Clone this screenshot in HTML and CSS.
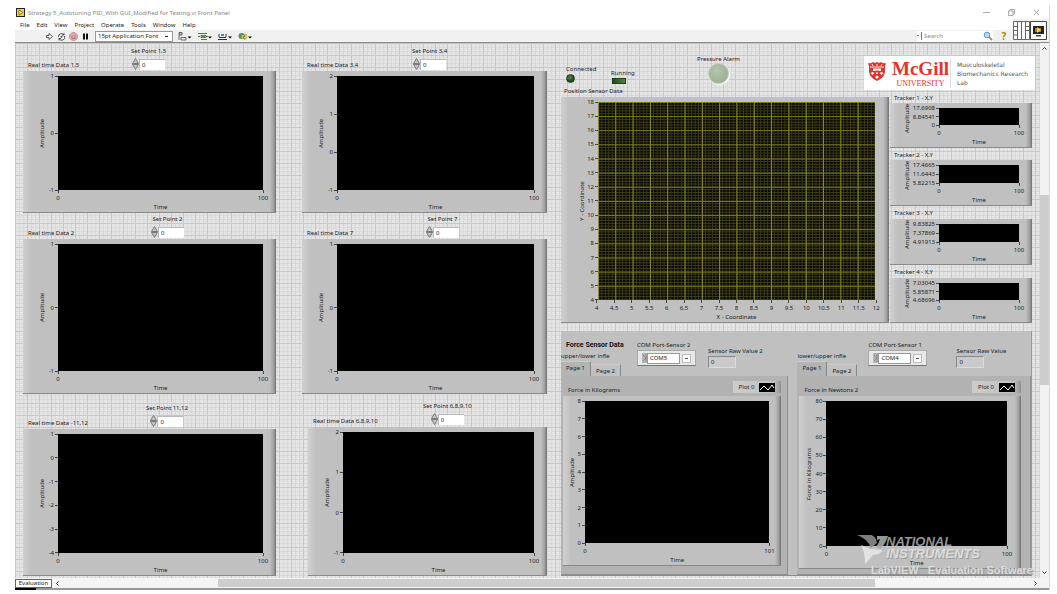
FILE: index.html
```html
<!DOCTYPE html>
<html lang="en">
<head>
<meta charset="utf-8">
<title>Strategy 5_Autotuning PID_With GUI_Modified for Testing.vi Front Panel</title>
<link rel="stylesheet" href="styles.css">
</head>
<body>
<svg class="defs" width="0" height="0" aria-hidden="true">
  <symbol id="spin" viewBox="0 0 7 12"><path d="M3.500 .5 6.500 5.500H.5zM3.500 11.500.5 6.500h6z" fill="#c4c4c4" stroke="#666" stroke-width=".8"/></symbol>
  <symbol id="wave" viewBox="0 0 16 9"><path d="M0 0h16v9H0z"/><path d="M1 7l4-4 4 4 4-5 2 3" fill="none" stroke="#fff"/></symbol>
  <symbol id="io" viewBox="0 0 5 10"><path d="M0 0h5v10H0z" fill="#b5b5b5"/><path d="M1 2l3 3-3 3M4 1v8" fill="none" stroke="#777" stroke-width=".7"/></symbol>
</svg>
<div class="window">
  <header class="titlebar">
    <svg class="app-icon" viewBox="0 0 9 9"><path d="M0 0h9v9H0z" fill="#222"/><path d="M1 1h7v7H1z" fill="#ffd21e"/><path d="M3 2l4 2.500L3 7z" fill="#fff7a0" stroke="#333" stroke-width=".6"/></svg>
    <h1 class="caption">Strategy 5_Autotuning PID_With GUI_Modified for Testing.vi Front Panel</h1>
    <div class="window-buttons">
      <button aria-label="Minimize"><svg viewBox="0 0 7 7"><path d="M0 3.500h7"/></svg></button>
      <button aria-label="Restore"><svg viewBox="0 0 7 7"><path d="M.5 2h4.500v4.500H.5zM2 2V.5h4.500V5H5"/></svg></button>
      <button aria-label="Close"><svg viewBox="0 0 7 7"><path d="M1 1l5 5M6 1L1 6"/></svg></button>
    </div>
  </header>
  <div class="bars">
    <div class="bar-stack">
      <nav class="menubar">
        <button>File</button><button>Edit</button><button>View</button><button>Project</button><button>Operate</button><button>Tools</button><button>Window</button><button>Help</button>
      </nav>
      <div class="toolbar">
        <div class="tool-run">
          <button aria-label="Run"><svg viewBox="0 0 9 9"><path d="M1.500 3.500h2.500V1.500l3.500 3L4 7.500V5.500H1.500z" fill="#fff" stroke="#333" stroke-width=".8"/></svg></button>
          <button aria-label="Run Continuously"><svg viewBox="0 0 9 9"><path d="M1.500 5A3 3 0 0 1 7 3M7.500 4A3 3 0 0 1 2 6.500M7 1v2H5M2 8.500v-2h2" fill="none" stroke="#333" stroke-width=".8"/><circle cx="4.500" cy="4.700" r="1" fill="#555"/></svg></button>
          <button aria-label="Abort"><svg viewBox="0 0 9 9"><path d="M3 .5h3L8.500 3v3L6 8.500H3L.5 6V3z" fill="#dba5a5" stroke="#c9a0a0"/><path d="M3 4v2.500h3V3.500" fill="none" stroke="#b77"/></svg></button>
          <button aria-label="Pause"><svg viewBox="0 0 9 9"><path d="M2 1.500h2v6H2zM5 1.500h2v6H5z" fill="#111"/></svg></button>
        </div>
        <select class="font-select" aria-label="Text settings"><option>15pt Application Font</option></select>
        <div class="tool-align">
          <button aria-label="Align"><svg viewBox="0 0 14 9"><path d="M1 .5h3v2.500H1z" fill="#9cc"/><path d="M1 .5h3v2.500H1zM1 3v5M3 5.500h5v2.500H3z" fill="none" stroke="#444" stroke-width=".8"/><path d="M9.500 4.500h4l-2 2z"/></svg></button>
          <button aria-label="Distribute"><svg viewBox="0 0 14 9"><path d="M0 1.500h9M0 4.500h2M8 4.500h2M3 3.500h5v2H3zM3 7.500h6" fill="none" stroke="#444" stroke-width=".8"/><path d="M3 4h4v1H3z" fill="#6a6"/><path d="M10 4.500h4l-2 2z"/></svg></button>
          <button aria-label="Resize"><svg viewBox="0 0 14 9"><path d="M0 7.500h9M1 5.500h7M1 2v3M8 2v3" fill="none" stroke="#333"/><path d="M3 2h3v2H3z" fill="#48a"/><path d="M10 4.500h4l-2 2z"/></svg></button>
          <button aria-label="Reorder"><svg viewBox="0 0 14 9"><circle cx="3.500" cy="4" r="3" fill="#4a9a5a"/><circle cx="6.500" cy="4.500" r="3" fill="#e8c33a"/><path d="M4 2.500c3-1 3 2 1 3l2 2" fill="none" stroke="#2c63a8"/><path d="M10 4.500h4l-2 2z"/></svg></button>
        </div>
        <div class="search"><span aria-hidden="true">•</span><input type="search" aria-label="Search" placeholder="Search"><svg viewBox="0 0 10 10"><path d="M6 6l3 3" stroke="#b58a4a" stroke-width="1.800"/><circle cx="4" cy="4" r="2.800" fill="#b8dcf5" stroke="#5a94c4"/></svg></div>
        <button class="help" aria-label="Context help">?</button>
      </div>
    </div>
    <svg class="connector" viewBox="0 0 17 19"><path d="M.5 .5h16v18H.5zM4.500 .5v18M8.500 .5v18M12.500 .5v18M.5 9.500h4M12.500 9.500h4M.5 5.500h4M12.500 5.500h4M.5 14h4" fill="#fff" stroke="#666"/></svg>
    <svg class="vi-icon" viewBox="0 0 17 19"><path d="M.5 .5h16v18H.5z" fill="#fff" stroke="#444"/><path d="M3 5h11v8H3z" fill="#222"/><path d="M5 7h6v4H5z" fill="#a77b22"/><path d="M7 6l4 3-4 3z" fill="#ffd21e"/><path d="M6 14h5v1.500H6z" fill="#345"/></svg>
  </div>

  <div class="workspace">
    <main class="canvas">
      <div class="col col-a">
        <section class="graph r1">
          <div class="graph-head"><h2>Real time Data 1,5</h2><div class="setpoint"><label for="s1">Set Point 1,5</label><div class="spinner"><svg><use href="#spin"/></svg><input id="s1" value="0"></div></div></div>
          <div class="chart">
            <div class="yaxis"><span class="ytitle">Amplitude</span><div class="yticks"><span>1</span><span>0</span><span>-1</span></div></div>
            <div class="plot"></div>
            <div class="xticks"><span>0</span><span>100</span></div><div class="xtitle">Time</div>
          </div>
        </section>
        <section class="graph r2">
          <div class="graph-head"><h2>Real time Data 2</h2><div class="setpoint"><label for="s2">Set Point 2</label><div class="spinner"><svg><use href="#spin"/></svg><input id="s2" value="0"></div></div></div>
          <div class="chart">
            <div class="yaxis"><span class="ytitle">Amplitude</span><div class="yticks"><span>1</span><span>0</span><span>-1</span></div></div>
            <div class="plot"></div>
            <div class="xticks"><span>0</span><span>100</span></div><div class="xtitle">Time</div>
          </div>
        </section>
        <section class="graph r3">
          <div class="graph-head"><h2>Real time Data -11,12</h2><div class="setpoint"><label for="s3">Set Point 11,12</label><div class="spinner"><svg><use href="#spin"/></svg><input id="s3" value="0"></div></div></div>
          <div class="chart">
            <div class="yaxis"><span class="ytitle">Amplitude</span><div class="yticks"><span>1</span><span>0</span><span>-1</span><span>-2</span><span>-3</span><span>-4</span></div></div>
            <div class="plot"></div>
            <div class="xticks"><span>0</span><span>100</span></div><div class="xtitle">Time</div>
          </div>
        </section>
      </div>

      <div class="col col-b">
        <section class="graph r1">
          <div class="graph-head"><h2>Real time Data 3,4</h2><div class="setpoint"><label for="s4">Set Point 3,4</label><div class="spinner"><svg><use href="#spin"/></svg><input id="s4" value="0"></div></div></div>
          <div class="chart">
            <div class="yaxis"><span class="ytitle">Amplitude</span><div class="yticks"><span>2</span><span>1</span><span>0</span><span>-1</span></div></div>
            <div class="plot"></div>
            <div class="xticks"><span>0</span><span>100</span></div><div class="xtitle">Time</div>
          </div>
        </section>
        <section class="graph r2">
          <div class="graph-head"><h2>Real time Data 7</h2><div class="setpoint"><label for="s5">Set Point 7</label><div class="spinner"><svg><use href="#spin"/></svg><input id="s5" value="0"></div></div></div>
          <div class="chart">
            <div class="yaxis"><span class="ytitle">Amplitude</span><div class="yticks"><span>1</span><span>0</span><span>-1</span></div></div>
            <div class="plot"></div>
            <div class="xticks"><span>0</span><span>100</span></div><div class="xtitle">Time</div>
          </div>
        </section>
        <section class="graph r3 short">
          <div class="graph-head"><h2>Real time Data 6,8,9,10</h2><div class="setpoint"><label for="s6">Set Point 6,8,9,10</label><div class="spinner"><svg><use href="#spin"/></svg><input id="s6" value="0"></div></div></div>
          <div class="chart">
            <div class="yaxis"><span class="ytitle">Amplitude</span><div class="yticks"><span>2</span><span>1</span><span>0</span><span>-1</span></div></div>
            <div class="plot"></div>
            <div class="xticks"><span>0</span><span>100</span></div><div class="xtitle">Time</div>
          </div>
        </section>
      </div>

      <div class="col col-c">
        <div class="status">
          <div class="led connected"><span>Connected</span><i></i></div>
          <div class="led running"><span>Running</span><i></i></div>
          <div class="led alarm"><span>Pressure Alarm</span><i></i></div>
          <div class="brand">
            <svg class="crest" viewBox="0 0 20 21"><path d="M1 2q3 1 5-1l2 1 2-1 2 1 2-1q2 2 5 1l-1 3v6q-1 6-8 9-7-3-8-9V5z" fill="#e2332b"/><path d="M3 6h14M5 3l1 2M10 3v2M15 3l-1 2" stroke="#fff" stroke-width=".9"/><path d="M6 7.500h8v2.500q-4-1-8 0zM3.500 12l2-1 2 1-2 2zM12.500 12l2-1 2 1-2 2zM8 16l2-1.500 2 1.500-2 2zM9 11.500h2v1.500H9z" fill="#fff"/></svg>
            <div class="mcgill"><strong>McGill</strong><small>UNIVERSITY</small></div>
            <p>Musculoskeletal<br>Biomechanics Research<br>Lab</p>
          </div>
        </div>

        <div class="sensors">
          <section class="position">
            <h2>Position Sensor Data</h2>
            <div class="chart">
              <div class="yaxis"><span class="ytitle">Y - Coordinate</span><div class="yticks"><span>18</span><span>17</span><span>16</span><span>15</span><span>14</span><span>13</span><span>12</span><span>11</span><span>10</span><span>9</span><span>8</span><span>7</span><span>6</span><span>5</span><span>4</span></div></div>
              <div class="plot"></div>
              <div class="xticks"><span>4</span><span>4.5</span><span>5</span><span>5.5</span><span>6</span><span>6.5</span><span>7</span><span>7.5</span><span>8</span><span>8.5</span><span>9</span><span>9.5</span><span>10</span><span>10.5</span><span>11</span><span>11.5</span><span>12</span></div><div class="xtitle">X - Coordinate</div>
            </div>
          </section>
          <div class="trackers">
            <section class="tracker"><h2>Tracker 1 - X,Y</h2>
              <div class="chart"><div class="yaxis"><span class="ytitle">Amplitude</span><div class="yticks"><span>17.6908</span><span>8.84541</span><span>0</span></div></div><div class="plot"></div><div class="xticks"><span>0</span><span>100</span></div><div class="xtitle">Time</div></div></section>
            <section class="tracker"><h2>Tracker 2 - X,Y</h2>
              <div class="chart"><div class="yaxis"><span class="ytitle">Amplitude</span><div class="yticks"><span>17.4665</span><span>11.6443</span><span>5.82215</span></div></div><div class="plot"></div><div class="xticks"><span>0</span><span>100</span></div><div class="xtitle">Time</div></div></section>
            <section class="tracker"><h2>Tracker 3 - X,Y</h2>
              <div class="chart"><div class="yaxis"><span class="ytitle">Amplitude</span><div class="yticks"><span>9.83825</span><span>7.37869</span><span>4.91913</span></div></div><div class="plot"></div><div class="xticks"><span>0</span><span>100</span></div><div class="xtitle">Time</div></div></section>
            <section class="tracker"><h2>Tracker 4 - X,Y</h2>
              <div class="chart"><div class="yaxis"><span class="ytitle">Amplitude</span><div class="yticks"><span>7.03045</span><span>5.85871</span><span>4.68696</span></div></div><div class="plot"></div><div class="xticks"><span>0</span><span>100</span></div><div class="xtitle">Time</div></div></section>
          </div>
        </div>

        <section class="force">
          <div class="unit unit-left">
            <div class="unit-head">
              <div class="unit-tabs">
                <h2 class="force-title">Force Sensor Data</h2>
                <span>upper/lower infle</span>
                <div class="tabs" role="tablist"><button role="tab" aria-selected="true">Page 1</button><button role="tab" aria-selected="false">Page 2</button></div>
              </div>
              <div class="com"><label for="c2">COM Port-Sensor 2</label><div class="combo"><svg><use href="#io"/></svg><select id="c2"><option>COM5</option></select><i></i></div></div>
              <div class="raw"><label for="v2">Sensor Raw Value 2</label><input id="v2" value="0" readonly></div>
            </div>
            <div class="page">
              <div class="page-head"><h3>Force in Kilograms</h3><div class="legend">Plot 0<svg><use href="#wave"/></svg></div></div>
              <div class="chart">
                <div class="yaxis"><span class="ytitle">Amplitude</span><div class="yticks"><span>8</span><span>7</span><span>6</span><span>5</span><span>4</span><span>3</span><span>2</span><span>1</span><span>0</span></div></div>
                <div class="plot"></div>
                <div class="xticks"><span>0</span><span>101</span></div><div class="xtitle">Time</div>
              </div>
            </div>
          </div>
          <div class="unit unit-right">
            <div class="unit-head">
              <div class="unit-tabs">
                <span>lower/upper infle</span>
                <div class="tabs" role="tablist"><button role="tab" aria-selected="true">Page 1</button><button role="tab" aria-selected="false">Page 2</button></div>
              </div>
              <div class="com"><label for="c1">COM Port-Sensor 1</label><div class="combo"><svg><use href="#io"/></svg><select id="c1"><option>COM4</option></select><i></i></div></div>
              <div class="raw"><label for="v1">Sensor Raw Value</label><input id="v1" value="0" readonly></div>
            </div>
            <div class="page">
              <div class="page-head"><h3>Force in Newtons 2</h3><div class="legend">Plot 0<svg><use href="#wave"/></svg></div></div>
              <div class="chart">
                <div class="yaxis"><span class="ytitle">Force in Kilograms</span><div class="yticks"><span>80</span><span>70</span><span>60</span><span>50</span><span>40</span><span>30</span><span>20</span><span>10</span><span>0</span></div></div>
                <div class="plot"></div>
                <div class="xticks"><span>0</span><span>100</span></div><div class="xtitle">Time</div>
              </div>
            </div>
          </div>
        </section>
      </div>
      <div class="watermark">
        <div class="ni"><svg viewBox="0 0 32 30"><path d="M0 1h14q5 1 6 8l-6 5Q11 5 0 1z" fill="#8c8c8c"/><path d="M20 2h11q-3 9-8 13l-4-2q3-4 4-8l-3 1z" fill="#a8a8a8"/><path d="M4 11l9 4 12 1q0 4-9 5l-8 9q0-12-4-19z" fill="#e6e6e6"/></svg>
          <div class="ni-name"><span>NATIONAL</span><br>INSTRUMENTS</div></div>
        <div class="ni-edition">LabVIEW&nbsp;&nbsp; Evaluation Software</div>
      </div>
    </main>
    <div class="vscroll"><svg viewBox="0 0 7 7"><path d="M1.500 4.500l2-2 2 2"/></svg><div class="vtrack"><i></i></div><svg viewBox="0 0 7 7"><path d="M1.500 2.500l2 2 2-2"/></svg></div>
  </div>
  <footer class="bottom"><span class="edition">Evaluation</span><svg viewBox="0 0 7 7"><path d="M4.500 1.500l-2 2 2 2"/></svg><div class="htrack"><i></i></div><svg viewBox="0 0 7 7"><path d="M2.500 1.500l2 2-2 2"/></svg></footer>
  <div class="edge"></div>
</div>
</body>
</html>
```
FILE: styles.css
```css
* { box-sizing: border-box; }
body {
  margin: 0;
  padding: 5px 7px 4px 15px;
  background: #fff;
  color: #222;
  font: 6px/8px "Noto Sans", "Open Sans", sans-serif;
}
h1, h2, h3, p { margin: 0; font: inherit; }
button, input, select {
  margin: 0;
  padding: 0;
  border: 0;
  border-radius: 0;
  background: none;
  color: inherit;
  font: inherit;
  appearance: none;
  outline: none;
}
.defs { position: absolute; }
svg { display: block; flex: none; }
.window { border-right: 1px solid #d8d8d8; }

/* window chrome */
.titlebar { display: flex; align-items: center; height: 14px; padding: 1px 9px 0 1px; color: #888; }
.app-icon { width: 9px; height: 9px; margin-right: 3px; }
.window-buttons { display: flex; gap: 18px; margin-left: auto; }
.window-buttons svg { width: 7px; height: 7px; fill: none; stroke: #888; stroke-width: .7; }
.bars { display: flex; align-items: center; background: #f0f0f0; border-bottom: 1px solid #888; height: 24px; padding-right: 2px; }
.bar-stack { flex: 1; align-self: stretch; display: flex; flex-direction: column; }
.menubar { display: flex; gap: 7px; height: 11px; padding-left: 5px; background: #fff; align-items: center; }
.toolbar { flex: 1; display: flex; align-items: center; }
.tool-run { display: flex; gap: 3px; padding-left: 30px; }
.tool-run svg { width: 9px; height: 9px; }
.font-select { width: 78px; height: 11px; margin: 0 5px 0 5px; padding-left: 2px; border: 1px solid #999; background: #fff linear-gradient(#222, #222) no-repeat right 4px center / 3px 1px; }
.tool-align { display: flex; gap: 6px; }
.tool-align svg { width: 14px; height: 9px; }
.search { display: flex; align-items: center; gap: 2px; margin-left: auto; background: #fff; height: 11px; }
.search input { width: 60px; border-left: 1px solid #777; padding-left: 2px; }
.search input::placeholder { color: #888; opacity: 1; }
.search svg { width: 10px; height: 10px; }
.help { width: 16px; margin: 0 1px 0 3px; color: #a68a00; font-size: 10px; font-weight: bold; line-height: 11px; }
.connector, .vi-icon { width: 17px; height: 19px; }
.workspace { display: flex; }

/* front panel */
.canvas {
  position: relative;
  flex: 1;
  min-width: 0;
  display: grid;
  grid-template-columns: 279fr 259fr 471fr;
  padding: 0 8px 2px 8px;
  background-color: #e4e4e4;
  background-image:
    linear-gradient(to right, #c8c8c8 1px, transparent 1px),
    linear-gradient(#c8c8c8 1px, transparent 1px),
    linear-gradient(to right, #d9d9d9 1px, transparent 1px),
    linear-gradient(#d9d9d9 1px, transparent 1px);
  background-size: 12px 100%, 100% 12px, 4px 100%, 100% 4px;
}
.col { min-width: 0; }
.col-a { padding-right: 26px; }
.col-b { padding-right: 14px; }

.chart {
  display: grid;
  grid-template-columns: 35px minmax(0, 1fr) 13px;
  grid-template-rows: auto 13px 9px;
  padding-top: 5px;
  background:
    linear-gradient(to right, #d0d0d0, #c2c2c2) left / 7px 100% no-repeat,
    linear-gradient(to right, #bebebe, #a0a0a0 60%, #707070) right / 6px 100% no-repeat,
    #c0c0c0;
  border-bottom: 1px solid #8a8a8a;
}
.plot { grid-column: 2; background: #000; }
.yaxis { display: flex; min-height: 0; padding-left: 14px; }
.ytitle { width: 10px; flex: none; writing-mode: vertical-rl; transform: rotate(180deg); text-align: center; line-height: 10px; white-space: nowrap; }
.yticks { flex: 1; display: flex; flex-direction: column; justify-content: space-between; margin: -4px 0; }
.yticks span { display: flex; align-items: center; justify-content: flex-end; gap: 1px; height: 8px; }
.yticks span::after { content: ""; width: 3px; height: 1px; background: #444; }
.xticks { grid-column: 2; display: flex; justify-content: space-between; margin: 0 -10px; }
.xticks span { display: flex; flex-direction: column; align-items: center; width: 20px; }
.xticks span::before { content: ""; width: 1px; height: 3px; margin-bottom: 1px; background: #444; }
.xtitle { grid-column: 2; text-align: center; line-height: 9px; }

.graph-head { display: flex; align-items: flex-end; padding-left: 5px; }
.graph-head h2 { width: 103px; padding-bottom: 2px; white-space: nowrap; }
.setpoint { display: flex; flex-direction: column; align-items: center; white-space: nowrap; padding-bottom: 1px; }
.spinner { display: flex; align-items: center; margin-top: 3px; }
.spinner svg { width: 7px; height: 12px; }
.spinner input { width: 26px; height: 11px; padding-left: 2px; background: #fff; border: 1px solid #bbb; border-width: 1px 0 0 1px; }
.r1 .graph-head { height: 28px; }
.r2 .graph-head { height: 26px; }
.r3 .graph-head { height: 35px; }
.r3 .spinner { margin-bottom: 1px; }
.r1 .plot { height: 114px; }
.r2 .plot { height: 127px; }
.r3 .plot { height: 119px; }
.col-a .r2 h2 { width: 123px; }
.col-a .r3 h2 { width: 118px; }
.col-b .r1 h2 { width: 105px; }
.col-b .r2 h2 { width: 119px; }
.col-b .r3 h2 { width: 110px; }
.short { padding-left: 6px; }
.short .graph-head { height: 33px; }
.short .plot { height: 121px; }

/* indicators and brand */
.status { display: flex; align-items: flex-start; height: 44px; padding-left: 5px; }
.led { display: flex; flex-direction: column; white-space: nowrap; }
.led i { display: block; }
.connected { padding-top: 22px; width: 45px; }
.connected i { width: 9px; height: 9px; margin-top: 1px; border-radius: 50%; background: radial-gradient(circle at 40% 35%, #5c8a50, #1d4a17 60%); border: 1px solid #2d3b2a; }
.running { padding-top: 26px; width: 86px; }
.running i { width: 14px; height: 6px; margin: 1px 0 0 1px; border: 1px solid #223f1c; background: linear-gradient(to right, #1f4a18, #56804b); }
.alarm { padding-top: 12px; align-items: center; }
.alarm i { width: 21px; height: 21px; border-radius: 50%; background: radial-gradient(circle at 40% 35%, #b6c6ae, #9fb197 65%); border: 1px solid #c4ccc0; box-shadow: 1px 1px 1px #fff; }
.brand { display: flex; align-items: center; width: 171px; height: 34px; margin: 13px -3px 0 auto; padding-left: 3px; background: #fff; }
.crest { width: 20px; height: 21px; margin: 0 4px 4px 0; }
.mcgill { display: flex; flex-direction: column; align-items: center; width: 60px; color: #e2332b; font-family: "Liberation Serif", serif; border-right: 1px solid #ddd; }
.mcgill strong { font-size: 19px; line-height: 21px; }
.mcgill small { font-size: 8px; line-height: 9px; }
.brand p { margin-left: 6px; color: #555; font: 6px/9px "DejaVu Sans", sans-serif; white-space: nowrap; }

.sensors { display: grid; grid-template-columns: 328fr 142fr; gap: 1px; }
.position h2 { height: 10px; padding-left: 3px; }
.position .chart { grid-template-columns: 37px minmax(0, 1fr) 14px; }
.position .yaxis { padding-left: 16px; }
.position .plot {
  height: 198px;
  background-color: #0a0a04;
  background-image:
    linear-gradient(to right, #8c8c28 1px, transparent 1px),
    linear-gradient(#7a7a24 1px, transparent 1px),
    linear-gradient(to right, #3c3c18 1px, transparent 1px),
    linear-gradient(#3c3c18 1px, transparent 1px);
  background-size: 6.25% 100%, 100% 7.142%, 1.25% 100%, 100% 1.428%;
}
.trackers { padding-top: 4px; }
.tracker h2 { height: 13px; padding: 3px 0 0 4px; line-height: 8px; }
.tracker:nth-child(-n+2) h2 { height: 12px; }
.tracker .chart { grid-template-columns: 49px minmax(0, 1fr) 13px; }
.tracker .plot { height: 17px; }
.tracker:nth-child(2) .plot, .tracker:nth-child(3) .plot { height: 18px; }
.tracker .yaxis { padding-left: 12px; }
.tracker .ytitle { margin: -5px 0 -8px; overflow: hidden; }

/* force sensors */
.force { display: grid; grid-template-columns: 237fr 234fr; margin-top: 8px; background: #c0c0c0; border-bottom: 1px solid #8a8a8a; border-right: 1px solid #999; white-space: nowrap; }
.unit { display: flex; flex-direction: column; min-width: 0; }
.unit-head { display: flex; height: 45px; }
.unit-tabs { display: flex; flex-direction: column; justify-content: flex-end; width: 76px; }
.unit-right .unit-tabs { width: 71px; }
.force-title { padding-left: 5px; color: #111; font: bold 7px/12px Roboto, sans-serif; }
.unit-tabs > span { line-height: 10px; }
.tabs { display: flex; align-items: flex-end; height: 15px; }
.tabs button { width: 30px; height: 12px; border-right: 1px solid #888; border-top: 1px solid #ccc; }
.tabs [aria-selected="true"] { height: 15px; background: #b4b4b4; padding-bottom: 2px; }
.com { width: 71px; padding-top: 9px; line-height: 10px; }
.unit-right .com { width: 88px; }
.combo { display: flex; align-items: center; width: 59px; height: 16px; padding: 2px 4px; background: #e8e8e8; border: 1px solid #aaa; border-bottom-color: #777; }
.combo svg { width: 5px; height: 10px; }
.combo select { flex: 1; min-width: 0; height: 11px; padding-left: 2px; background: #fff; border: 1px solid #999; line-height: 9px; }
.combo i { width: 9px; height: 9px; margin-left: 2px; border: 1px solid #bbb; background: #fff linear-gradient(#555, #555) no-repeat center / 3px 1px; }
.raw { padding-top: 15px; line-height: 10px; }
.raw label { display: block; }
.raw input { display: block; width: 28px; height: 12px; padding-left: 2px; background: #cacaca; border: 1px solid #888; border-right-color: #ddd; border-bottom-color: #ddd; }
.page { flex: 1; margin-right: 9px; padding: 0 6px 5px 2px; background: #b2b2b2; border: 1px solid #909090; border-width: 0 1px 1px 0; }
.unit-right .page { margin-right: 0; padding-right: 9px; }
.page-head { display: flex; justify-content: space-between; height: 20px; padding: 5px 0 3px 5px; }
.page-head h3 { padding-top: 5px; }
.legend { display: flex; align-items: center; gap: 5px; height: 12px; padding: 0 6px; background: linear-gradient(to right, #ccc, #c0c0c0 85%, #909090); }
.legend svg { width: 16px; height: 9px; }
.unit-left .chart { grid-template-columns: 22px minmax(0, 1fr) 12px; }
.unit-right .chart { grid-template-columns: 27px minmax(0, 1fr) 14px; }
.unit-left .yaxis { padding-left: 4px; }
.unit-right .yaxis { padding-left: 5px; }
.unit-left .plot { height: 142px; }
.unit-right .plot { height: 145px; }

.watermark { position: absolute; right: 3px; bottom: 2px; color: #e0e0e0; font: bold 13px/12px "Liberation Sans", sans-serif; text-shadow: 1px 1px 0 #999; white-space: nowrap; opacity: .9; }
.ni { display: flex; width: 180px; }
.ni svg { width: 32px; height: 30px; }
.ni-name { font-style: italic; margin-left: -3px; padding-top: 2px; }
.ni-name span { color: #a4a4a4; text-shadow: none; }
.ni-edition { padding-left: 14px; font-size: 11px; line-height: 12px; }

/* scrollbars */
.vscroll, .bottom { stroke: #333; fill: none; }
.vscroll { width: 9px; display: flex; flex-direction: column; background: #f2f2f2; align-items: center; padding: 2px 0; }
.vscroll svg, .bottom svg { width: 7px; height: 7px; }
.vtrack { flex: 1; width: 100%; padding-top: 143px; }
.vtrack i { display: block; height: 190px; background: #cdcdcd; }
.bottom { display: flex; align-items: center; height: 10px; background: #f4f4f4; padding-right: 8px; }
.edition { width: 37px; height: 9px; border: 1px solid #666; background: #fff; text-align: center; line-height: 7px; }
.bottom svg { margin: 0 2px; }
.htrack { flex: 1; height: 8px; }
.htrack i { display: block; width: 68%; height: 8px; margin-left: 16%; background: #cdcdcd; }
.edge { height: 2px; background: linear-gradient(to right, #000 0 2%, #999 2%); }
```
